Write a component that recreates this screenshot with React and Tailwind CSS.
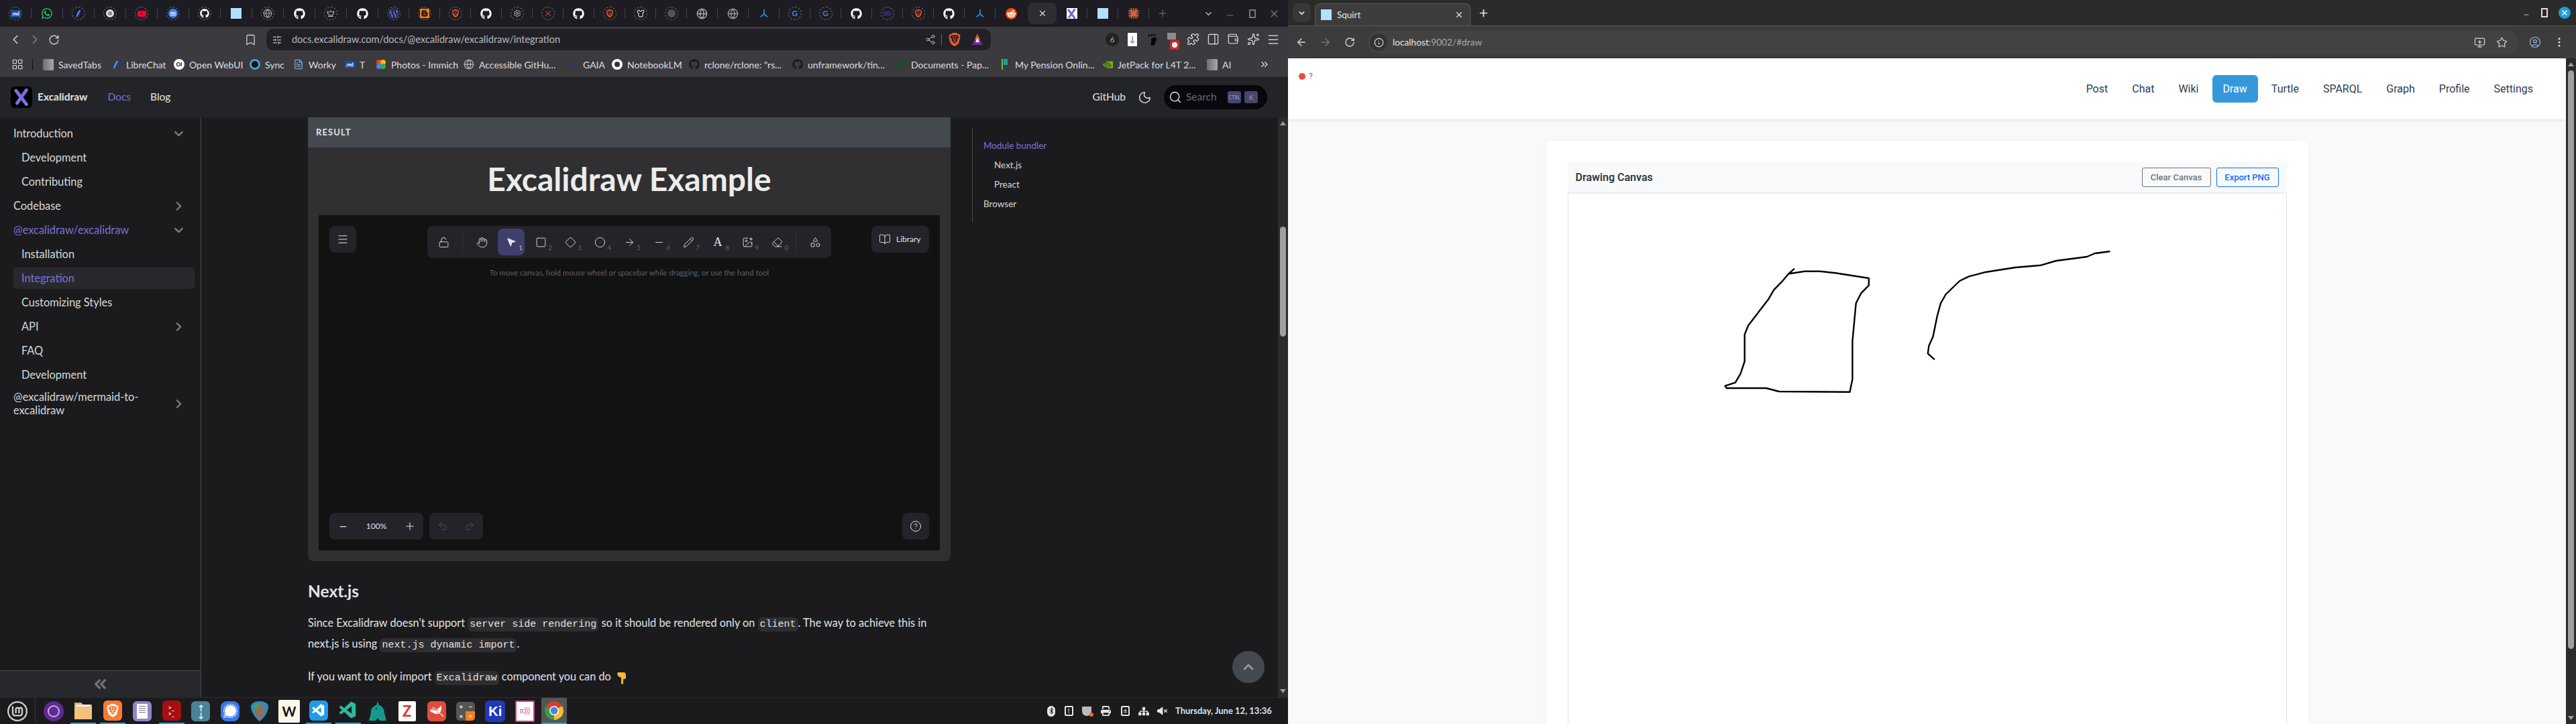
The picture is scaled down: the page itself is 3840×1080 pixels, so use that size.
import React from "react";
import {
  ChevronLeft, ChevronRight, ChevronDown, ChevronUp, ChevronsRight, ChevronsLeft, RotateCw, Bookmark, SlidersHorizontal, Share2, Puzzle,
  PanelRight, Wallet, Sparkles, Menu, Minus, Plus, X, Moon, Search, LayoutGrid, Globe, Crown, Settings, Shirt, FileText, LockOpen, Hand, MousePointer2, Square,
  Diamond, Circle, ArrowRight, Pencil, ImagePlus, Eraser, Shapes, BookOpen, Undo2, Redo2, CircleHelp, ArrowLeft, Info, Star,
  CircleUser, EllipsisVertical, MonitorDown,
} from "lucide-react";
import { FaGithub, FaWhatsapp, FaRedditAlien, FaBluetoothB, FaPrint, FaSitemap, FaVolumeXmark } from "react-icons/fa6";
import { SiBrave, SiWordpress, SiBlogger, SiYoutube, SiLinuxmint, SiSignal, SiGimp, SiNvidia } from "react-icons/si";
import { VscVscode } from "react-icons/vsc";

const Ring = ({ children }) => (
  <span className="flex h-[20px] w-[20px] items-center justify-center rounded-full border border-dashed border-[#77777d]">{children}</span>
);
const Md = () => <span className="flex h-[11px] w-[15px] items-center justify-center rounded-[1px] bg-[#1c4fa5] text-[7px] font-bold leading-none text-white">.md</span>;
const Feather = ({ s = 14 }) => (
  <svg width={s} height={s} viewBox="0 0 16 16"><path d="M12 1C7 3 4 8 4 15c4-2 8-7 8-14z" fill="#4338ca" /><path d="M10 3C8 6 6 9 5 14" stroke="#22d3ee" strokeWidth="1.4" fill="none" /></svg>
);
const Gh = () => <FaGithub size={17} className="text-white" />;
const BlueSq = () => <span className="block h-[16px] w-[16px] bg-[#b3e0ff]" />;
const XLogo = ({ s = 16, c = "#6965db" }) => (
  <svg width={s} height={s} viewBox="0 0 32 32"><path d="M6 4 L25 29" stroke={c} strokeWidth="6" strokeLinecap="round" /><path d="M25 3 L8 27" stroke={c} strokeWidth="6" strokeLinecap="round" /></svg>
);
const Tines = () => (
  <svg width="14" height="14" viewBox="0 0 16 16"><path d="M8 1v8M8 9l-6 5M8 9l6 5" stroke="#2a8fd6" strokeWidth="2" fill="none" /></svg>
);
const Brave = ({ s = 12, c = "#e0532d" }) => <SiBrave size={s} style={{ color: c }} />;

const tabs = [
  <Ring><Md /></Ring>,
  <FaWhatsapp size={18} className="text-[#25d366]" />,
  <Ring><Feather /></Ring>,
  <Ring><span className="block h-[12px] w-[12px] rounded-full border-[3px] border-[#ddd] bg-[#888]" /></Ring>,
  <Ring><SiYoutube size={13} className="text-[#f03]" /></Ring>,
  <Ring><span className="flex h-[14px] w-[14px] flex-col items-center justify-center gap-[1px] rounded-full bg-[#3b82f6]"><i className="block h-px w-[8px] bg-white" /><i className="block h-px w-[8px] bg-white" /><i className="block h-px w-[8px] bg-white" /></span></Ring>,
  <Ring><FaGithub size={14} className="text-white" /></Ring>,
  <BlueSq />,
  <Ring><Globe size={14} className="text-[#a8a8ae]" /></Ring>,
  <Gh />,
  <Ring><Crown size={12} className="text-[#ccc]" /></Ring>,
  <Gh />,
  <Ring><SiWordpress size={14} className="text-[#5a72e0]" /></Ring>,
  <Ring><SiBlogger size={14} className="text-[#f57d00]" /></Ring>,
  <Ring><Brave /></Ring>,
  <Gh />,
  <Ring><Settings size={12} className="text-[#bbb]" /></Ring>,
  <Ring><X size={14} className="text-[#b33]" /></Ring>,
  <Gh />,
  <Ring><Brave /></Ring>,
  <Ring><Shirt size={12} className="text-white" /></Ring>,
  <Ring><span className="block h-[12px] w-[12px] rounded-full bg-[#555]" /></Ring>,
  <Globe size={17} className="text-[#aeb0b5]" />,
  <Globe size={17} className="text-[#9a9ca0]" />,
  <Tines />,
  <Ring><span className="text-[12px] font-bold leading-none text-[#3f7fd8]">G</span></Ring>,
  <Ring><span className="text-[12px] font-bold leading-none text-[#3f7fd8]">G</span></Ring>,
  <Gh />,
  <Ring><span className="text-[8px] font-bold leading-none text-[#4338ca]">DD</span></Ring>,
  <Ring><Brave /></Ring>,
  <Gh />,
  <Tines />,
  <span className="flex h-[17px] w-[17px] items-center justify-center rounded-full bg-[#ff4500]"><FaRedditAlien size={13} className="text-white" /></span>,
];
const tabsAfter = [
  <span className="flex h-[16px] w-[16px] items-center justify-center bg-white"><XLogo s={15} /></span>,
  <BlueSq />,
  <svg width="16" height="16" viewBox="0 0 16 16"><g stroke="#d9623f" strokeWidth="1.5"><path d="M8 0v16M0 8h16M2 2l12 12M14 2L2 14M4 0l8 16M12 0L4 16M0 4l16 8M0 12l16-8" /></g></svg>,
];

const Slot = ({ w, children, sep = true }) => (
  <div className={`flex h-full shrink-0 items-center ${w}`}>
    <div className="flex flex-1 items-center justify-center">{children}</div>
    {sep && <div className="h-[14px] w-px bg-[#45454b]" />}
  </div>
);

const LeftTabs = () => (
  <div className="flex h-[40px] shrink-0 items-center bg-[#1c1c22] text-[#d8d8dc]">
    {tabs.map((t, i) => (
      <Slot key={i} w={i < 12 ? "w-[47px]" : "w-[46px]"} sep={i !== 32}>{t}</Slot>
    ))}
    <div className="ml-[2px] flex h-[32px] w-[43px] shrink-0 items-center justify-center rounded-[8px] bg-[#2d2d33]"><X size={14} /></div>
    {tabsAfter.map((t, i) => (
      <Slot key={i} w="w-[46px]">{t}</Slot>
    ))}
    <div className="ml-[2px] flex w-[36px] shrink-0 justify-center"><Plus size={16} className="text-[#5c5c62]" /></div>
    <div className="ml-[33px] flex w-[34px] shrink-0 justify-center"><ChevronDown size={15} /></div>
    <div className="flex w-[32px] shrink-0 justify-center"><Minus size={14} className="mt-[5px] text-[#77777d]" /></div>
    <div className="flex w-[33px] shrink-0 justify-center"><span className="block h-[13px] w-[10px] border-2 border-[#77777d]" /></div>
    <div className="flex w-[33px] shrink-0 justify-center"><X size={17} className="text-[#77777d]" /></div>
  </div>
);

const BIcon = ({ children }) => <div className="flex w-[29px] shrink-0 justify-center">{children}</div>;
const RIcon = ({ children }) => <div className="flex w-[30px] shrink-0 justify-center">{children}</div>;

const LeftToolbar = () => (
  <div className="flex h-[38px] shrink-0 items-center bg-[#3a3a3f] pl-[8px] text-[#e6e6e8]">
    <BIcon><ChevronLeft size={22} strokeWidth={1.4} /></BIcon>
    <BIcon><ChevronRight size={22} strokeWidth={1.4} className="text-[#88888c]" /></BIcon>
    <BIcon><RotateCw size={17} strokeWidth={1.6} /></BIcon>
    <div className="ml-[264px] flex w-[29px] shrink-0 justify-center"><Bookmark size={19} strokeWidth={1.4} /></div>
    <div className="ml-[9px] flex h-[32px] w-[1080px] shrink-0 items-center rounded-[10px] bg-[#202026] pl-[8px] pr-[10px]">
      <SlidersHorizontal size={15} className="w-[16px] text-[#b8b8bc]" />
      <span className="ml-[14px] text-[14.5px] text-[#b9b9bf]">docs.excalidraw.com/docs/@excalidraw/excalidraw/integration</span>
      <Share2 size={16} strokeWidth={1.4} className="ml-auto text-[#c8c8cc]" />
      <span className="ml-[8px] mr-[9px] h-[16px] w-px bg-[#666]" />
      <Brave s={20} c="#f1592a" />
      <svg width="20" height="20" viewBox="0 0 20 20" className="ml-[14px]"><path d="M10 1 L18 18 H2z" fill="#6b2c91" /><path d="M10 1 L14 10 H6z" fill="#e0532d" /><path d="M10 7 L13 14 H7z" fill="#fff" /></svg>
    </div>
    <div className="ml-[166px] flex">
      <RIcon><span className="flex h-[20px] w-[20px] items-center justify-center rounded-full bg-[#222] text-[12px] text-[#aaa]">6</span></RIcon>
      <RIcon><span className="flex h-[20px] w-[14px] items-center justify-center bg-white text-[12px] font-bold text-[#888]">↓</span></RIcon>
      <RIcon><svg width="14" height="20" viewBox="0 0 14 20"><path d="M6 8c3-1 7-2 7 1 0 3-2 4-2 6s-1 4-4 4-3-3-2-5-1-5 1-6z" fill="#050505" /><circle cx="2" cy="4" r="1.5" fill="#050505" /><circle cx="6" cy="3" r="1.5" fill="#050505" /><circle cx="10" cy="3" r="1.5" fill="#050505" /></svg></RIcon>
      <RIcon><span className="relative block h-[20px] w-[16px]"><span className="block h-[10px] w-[13px] bg-[#8c8c90]" /><span className="absolute bottom-[-5px] right-[-2px] flex h-[14px] w-[14px] items-center justify-center rounded-[2px] bg-[#c92a2a]"><span className="block h-[8px] w-[8px] rounded-full bg-white" /></span></span></RIcon>
      <RIcon><Puzzle size={19} strokeWidth={1.5} /></RIcon>
      <RIcon><PanelRight size={19} strokeWidth={1.5} /></RIcon>
      <RIcon><Wallet size={18} strokeWidth={1.5} /></RIcon>
      <RIcon><Sparkles size={19} strokeWidth={1.5} /></RIcon>
      <RIcon><Menu size={20} strokeWidth={1.5} /></RIcon>
    </div>
  </div>
);

const FolderIc = () => <span className="block h-[17px] w-[16px] rounded-[2px] bg-gradient-to-r from-[#6f6f73] to-[#a9a9ad]" />;
const GhDark = () => <FaGithub size={16} className="text-[#1a1a1e]" />;
const bookmarks = [
  ["w-[101px]", <FolderIc />, "SavedTabs"],
  ["w-[94px]", <Feather s={16} />, "LibreChat"],
  ["w-[113px]", <span className="flex h-[16px] w-[16px] items-center justify-center rounded-full bg-white text-[8px] font-bold text-black">OI</span>, "Open WebUI"],
  ["w-[65px]", <span className="block h-[16px] w-[16px] rounded-full border-[3px] border-[#3ba3d0] bg-[#111]" />, "Sync"],
  ["w-[76px]", <FileText size={16} className="text-[#7fa5c9]" />, "Worky"],
  ["w-[47px]", <Md />, "T"],
  ["w-[131px]", <svg width="16" height="16" viewBox="0 0 16 16"><circle cx="5" cy="5" r="4" fill="#ea4335" /><circle cx="11" cy="5" r="4" fill="#fbbc04" /><circle cx="5" cy="11" r="4" fill="#4285f4" /><circle cx="11" cy="11" r="4" fill="#34a853" /></svg>, "Photos - Immich"],
  ["w-[155px]", <Globe size={16} className="text-[#aeb0b5]" />, "Accessible GitHu..."],
  ["w-[66px]", <span className="text-[7px] font-bold leading-none text-[#23407a]">GAIA</span>, "GAIA"],
  ["w-[115px]", <span className="block h-[16px] w-[16px] rounded-full border-[4px] border-white bg-[#333]" />, "NotebookLM"],
  ["w-[154px]", <GhDark />, 'rclone/rclone: "rs...'],
  ["w-[154px]", <GhDark />, "unframework/tin..."],
  ["w-[155px]", <svg width="16" height="16" viewBox="0 0 16 16"><path d="M14 1C7 3 3 7 2 15c6-1 11-6 12-14z" fill="#17541f" /></svg>, "Documents - Pap..."],
  ["w-[153px]", <span className="flex h-[16px] w-[10px]"><i className="block w-[2px] bg-[#7cb342]" /><i className="ml-[1px] block h-[9px] w-[6px] bg-[#0fa3a3]" /></span>, "My Pension Onlin..."],
  ["w-[156px]", <SiNvidia size={15} className="text-[#76b900]" />, "JetPack for L4T 2..."],
  ["w-[75px]", <FolderIc />, "AI"],
];
const Bookmarks = () => (
  <div className="flex h-[37px] shrink-0 items-center border-b border-[#2f2f33] bg-[#3a3a3f] pl-[17px] text-[14px] text-[#dedee2]">
    <LayoutGrid size={18} strokeWidth={1.5} />
    <span className="ml-[13px] h-[16px] w-px bg-[#111]" />
    <div className="ml-[15px] flex">
      {bookmarks.map(([w, ic, t], i) => (
        <div key={i} className={`flex shrink-0 items-center gap-[7px] whitespace-nowrap ${w}`}>
          <span className="flex w-[16px] shrink-0 justify-center">{ic}</span>
          <span>{t}</span>
        </div>
      ))}
    </div>
    <ChevronsRight size={16} className="ml-[3px]" />
  </div>
);

const DocsNav = () => (
  <div className="flex h-[60px] shrink-0 items-center bg-[#232427] pl-[16px] text-[15.5px] text-[#e3e3e3]">
    <div className="flex h-[32px] w-[32px] items-center justify-center rounded-[6px] bg-black"><XLogo s={26} c="#7a6fe6" /></div>
    <span className="ml-[8px] font-bold">Excalidraw</span>
    <span className="ml-[30px] text-[#7b71d6]">Docs</span>
    <span className="ml-[29px]">Blog</span>
    <span className="ml-auto">GitHub</span>
    <Moon size={21} strokeWidth={1.6} className="ml-[18px]" />
    <div className="ml-[18px] mr-[31px] flex h-[36px] w-[154px] items-center rounded-full bg-[#07070d] pl-[7px]">
      <Search size={20} strokeWidth={1.7} />
      <span className="ml-[6px] w-[62px] text-[#6a6a6e]">Search</span>
      <span className="flex h-[18px] w-[20px] items-center justify-center rounded-[3px] bg-[#47476b] text-[7px] text-[#a0a0c0]">CTRL</span>
      <span className="ml-[5px] flex h-[18px] w-[20px] items-center justify-center rounded-[3px] bg-[#47476b] text-[10px] text-[#a0a0c0]">K</span>
    </div>
  </div>
);

const SideRow = ({ lvl = 0, children, chev, active, sel, h = "h-[36px]" }) => (
  <div className={`flex w-[270px] items-center justify-between pr-[13px] ${lvl ? "pl-[12px]" : ""} ${h} ${sel ? "rounded-[5px] bg-[#29292d]" : ""} ${active ? "text-[#7b71d6]" : ""}`}>
    <span>{children}</span>
    {chev === "d" && <ChevronDown size={21} strokeWidth={2.6} className="text-[#7f7f83]" />}
    {chev === "r" && <ChevronRight size={21} strokeWidth={2.6} className="text-[#7f7f83]" />}
  </div>
);

const Sidebar = () => (
  <div className="flex h-full w-[300px] shrink-0 flex-col border-r border-[#4a4a4e] text-[16.4px] text-[#d6d8dc]">
    <div className="flex flex-1 flex-col pl-[20px] pt-[6px]">
      <SideRow chev="d">Introduction</SideRow>
      <SideRow lvl={1}>Development</SideRow>
      <SideRow lvl={1}>Contributing</SideRow>
      <SideRow chev="r">Codebase</SideRow>
      <SideRow chev="d" active>@excalidraw/excalidraw</SideRow>
      <SideRow lvl={1}>Installation</SideRow>
      <SideRow lvl={1} active sel h="h-[32px] my-[2px]">Integration</SideRow>
      <SideRow lvl={1}>Customizing Styles</SideRow>
      <SideRow lvl={1} chev="r">API</SideRow>
      <SideRow lvl={1}>FAQ</SideRow>
      <SideRow lvl={1}>Development</SideRow>
      <SideRow chev="r" h="h-[46px] mt-[2px] leading-[20px]">@excalidraw/mermaid-to-<br />excalidraw</SideRow>
    </div>
    <div className="flex h-[40px] shrink-0 items-center justify-center border-t border-[#4a4a4e] bg-[#27282b]"><ChevronsLeft size={27} strokeWidth={3} className="text-[#727275]" /></div>
  </div>
);

const Tool = ({ n, active, children }) => (
  <div className={`relative flex h-[40px] w-[40px] shrink-0 items-center justify-center rounded-[8px] ${active ? "bg-[#403e6a]" : ""}`}>
    {children}
    {n && <span className={`absolute bottom-[7px] right-[3px] text-[10px] leading-none ${active ? "text-[#bbb]" : "text-[#666]"}`}>{n}</span>}
  </div>
);
const ic = { size: 17, strokeWidth: 1.3, className: "text-[#e3e3e8]" };

const Excali = () => (
  <div className="mx-[16px] flex h-[500px] flex-col bg-[#121212] p-[16px]">
    <div className="flex items-start">
      <div className="flex h-[40px] w-[40px] items-center justify-center rounded-[8px] bg-[#232329]"><Menu size={18} strokeWidth={1.6} className="text-[#e3e3e8]" /></div>
      <div className="ml-[106px] flex h-[48px] w-[602px] items-center rounded-[8px] bg-[#232329] pl-[4px]">
        <Tool><LockOpen {...ic} /></Tool>
        <span className="ml-[8px] h-[28px] w-px bg-[#323238]" />
        <div className="ml-[8px]"><Tool><Hand {...ic} /></Tool></div>
        <div className="ml-[4px] flex gap-[4px]">
          <Tool n="1" active><MousePointer2 size={16} strokeWidth={1.3} fill="#e3e2fe" className="text-[#e3e2fe]" /></Tool>
          <Tool n="2"><Square {...ic} /></Tool>
          <Tool n="3"><Diamond {...ic} /></Tool>
          <Tool n="4"><Circle {...ic} /></Tool>
          <Tool n="5"><ArrowRight {...ic} /></Tool>
          <Tool n="6"><Minus {...ic} /></Tool>
          <Tool n="7"><Pencil {...ic} /></Tool>
          <Tool n="8"><span className="text-[18px] leading-none text-[#e3e3e8] [font-family:'Liberation_Serif',serif]">A</span></Tool>
          <Tool n="9"><ImagePlus {...ic} /></Tool>
          <Tool n="0"><Eraser {...ic} /></Tool>
        </div>
        <span className="ml-[8px] h-[28px] w-px bg-[#323238]" />
        <div className="ml-[8px]"><Tool><Shapes {...ic} /></Tool></div>
      </div>
      <div className="ml-auto flex h-[40px] w-[86px] items-center rounded-[8px] bg-[#232329] pl-[11px] text-[12px] text-[#e3e3e8]">
        <BookOpen size={18} strokeWidth={1.2} />
        <span className="ml-[8px]">Library</span>
      </div>
    </div>
    <div className="mt-[12px] text-center text-[11.4px] leading-[20px] text-[#5e5e62]">To move canvas, hold mouse wheel or spacebar while dragging, or use the hand tool</div>
    <div className="mt-auto flex">
      <div className="flex h-[40px] w-[140px] items-center rounded-[8px] bg-[#232329] text-[12px] text-[#e3e3e8]">
        <span className="flex w-[40px] justify-center"><Minus size={15} strokeWidth={2} /></span>
        <span className="w-[60px] text-center">100%</span>
        <span className="flex w-[40px] justify-center"><Plus size={18} strokeWidth={1.4} /></span>
      </div>
      <div className="ml-[9px] flex h-[40px] w-[80px] items-center rounded-[8px] bg-[#232329] text-[#55555b]">
        <span className="flex w-[40px] justify-center"><Undo2 size={16} strokeWidth={1.4} /></span>
        <span className="flex w-[40px] justify-center"><Redo2 size={16} strokeWidth={1.4} /></span>
      </div>
      <div className="ml-auto flex h-[40px] w-[40px] items-center justify-center rounded-[8px] bg-[#232329]"><CircleHelp size={18} strokeWidth={1.3} className="text-[#e3e3e8]" /></div>
    </div>
  </div>
);

const Code = ({ children }) => <code className="rounded-[6px] bg-[#2e2e30] px-[3px] py-[2px] text-[15px] text-[#e3e3e3] [font-family:'Liberation_Mono',monospace]">{children}</code>;

const Content = () => (
  <div className="relative flex h-full flex-1 overflow-hidden pl-[159px]">
    <div className="w-[958px] shrink-0 text-[16px] text-[#e3e3e3]">
      <div className="flex h-[45px] items-center bg-[#444950] pl-[12px] text-[13px] font-bold tracking-[1.1px]">RESULT</div>
      <div className="rounded-b-[8px] bg-[#303032] pb-[16px]">
        <h1 className="flex h-[101px] items-center justify-center pb-[8px] text-[48px] font-bold text-[#ececec]">Excalidraw Example</h1>
        <Excali />
      </div>
      <h2 className="mt-[28px] text-[24.5px] font-bold leading-[34px]">Next.js</h2>
      <p className="mt-[16px] whitespace-nowrap text-[16.3px] leading-[28px]">
        Since Excalidraw doesn't support <Code>server side rendering</Code> so it should be rendered only on <Code>client</Code>. The way to achieve this in<br />
        next.js is using <Code>next.js dynamic import</Code>.
      </p>
      <p className="mt-[18px] flex items-center gap-[4px] whitespace-pre text-[16.3px] leading-[28px]">
        <span>If you want to only import <Code>Excalidraw</Code> component you can do </span>
        <svg width="16" height="20" viewBox="0 0 16 20"><path d="M2 2h9c2 0 3 2 3 4v4c0 2-2 2-4 2v6c0 2-3 2-3 0v-8L3 8C1 7 1 3 2 2z" fill="#f5b82e" /></svg>
      </p>
    </div>
    <div className="ml-[32px] mt-[16px] h-[140px] w-[300px] border-l border-[#4a4a4e] pl-[16px] text-[13.5px] text-[#d8d8d8]">
      <div className="mt-[12px] flex h-[29px] items-center text-[#7b71d6]">Module bundler</div>
      <div className="flex h-[29px] items-center pl-[16px]">Next.js</div>
      <div className="flex h-[29px] items-center pl-[16px]">Preact</div>
      <div className="flex h-[29px] items-center">Browser</div>
    </div>
    <div className="absolute bottom-[21px] right-[20px] flex h-[48px] w-[48px] items-center justify-center rounded-full bg-[#444950]"><ChevronUp size={24} strokeWidth={2.6} className="text-[#9a9a9e]" /></div>
  </div>
);

const Tri = ({ up }) => (
  <svg width="9" height="6" viewBox="0 0 9 6"><path d={up ? "M4.5 0L9 6H0z" : "M0 0h9L4.5 6z"} fill="#9c9c9c" /></svg>
);

const Dock = () => {
  const Rounded = ({ bg, children }) => <span className={`flex h-[30px] w-[28px] items-center justify-center rounded-[6px] ${bg}`}>{children}</span>;
  const items = [
    [0, <span className="flex h-[30px] w-[30px] items-center justify-center rounded-full bg-[#5f2a91]"><span className="block h-[18px] w-[18px] rounded-full border-2 border-[#c9a9e8]" /></span>],
    [1, <svg width="30" height="30" viewBox="0 0 30 30"><path d="M2 3h10l3 3h13v22H2z" fill="#e0a860" /><path d="M2 9h26v19H2z" fill="#f4c27a" /><path d="M4 6h22v3H4z" fill="#eee" /></svg>],
    [1, <Rounded bg="bg-[#fb7a2e]"><SiBrave size={20} className="text-white" /></Rounded>],
    [0, <Rounded bg="bg-[#8d88c9]"><span className="flex h-[22px] w-[16px] flex-col gap-[2px] bg-white p-[3px]"><i className="block h-px bg-[#777]" /><i className="block h-px bg-[#777]" /><i className="block h-px bg-[#777]" /><i className="block h-px bg-[#777]" /></span></Rounded>],
    [1, <Rounded bg="bg-[#a50f0f]"><span className="text-[9px] font-bold leading-[9px] text-white">&gt;_<br />&gt;_</span></Rounded>],
    [0, <Rounded bg="bg-[#4c8296]"><span className="flex h-full w-full flex-col items-center justify-around text-[11px] font-bold leading-none text-white">↑<br />↓</span></Rounded>],
    [0, <span className="flex h-[30px] w-[28px] items-center justify-center rounded-[9px] bg-[#3a76f0]"><SiSignal size={21} className="text-white" /></span>],
    [0, <svg width="28" height="32" viewBox="0 0 28 32"><path d="M14 1c7 0 13 3 13 8 0 8-7 18-13 22C8 27 1 17 1 9c0-5 6-8 13-8z" fill="#2c8fb8" /><path d="M7 6c6-2 13 1 15 6-1 6-5 12-8 17C10 24 4 16 7 6z" fill="#9a6a5a" /><path d="M5 8c3-3 9-3 12 0-5 0-7 3-7 9z" fill="#4f9d5b" /></svg>],
    [0, <span className="flex h-[34px] w-[32px] items-center justify-center rounded-[2px] bg-[#fbf6ea] text-[20px] font-bold text-[#111]">W</span>],
    [1, <span className="flex h-[30px] w-[28px] items-center justify-center rounded-[6px] bg-[#1f9ce8]"><VscVscode size={22} className="text-white" /></span>],
    [1, <VscVscode size={30} className="text-[#2dbba0]" />],
    [0, <svg width="28" height="32" viewBox="0 0 28 32"><path d="M14 1l2 6c5 1 8 6 8 12l3 11H17l-3-4-3 4H1l3-11C3 13 7 8 12 7z" fill="#139a8c" /><circle cx="12" cy="12" r="1.5" fill="#0a4f49" /></svg>],
    [0, <span className="flex h-[30px] w-[26px] items-center justify-center rounded-[2px] bg-white text-[22px] font-bold leading-none text-[#d9342b]">Z</span>],
    [0, <Rounded bg="bg-[#e04c38]"><SiGimp size={20} className="text-white" /></Rounded>],
    [0, <span className="grid h-[28px] w-[28px] grid-cols-2 grid-rows-2 overflow-hidden rounded-[5px] bg-[#555] text-center text-[10px] font-bold leading-[14px] text-white"><i className="not-italic">+</i><i className="not-italic">−</i><i className="not-italic">×</i><i className="bg-[#f08020] not-italic">=</i></span>],
    [0, <span className="flex h-[32px] w-[30px] items-center justify-center rounded-[6px] bg-[#2337b8] text-[20px] font-bold text-white [font-family:'Liberation_Sans',sans-serif]">Ki</span>],
    [0, <span className="flex h-[32px] w-[29px] items-center justify-center rounded-[2px] border-2 border-[#e03a8c] bg-white text-[11px] text-[#e03a8c]">π)))</span>],
    [2, <svg width="30" height="30" viewBox="0 0 30 30"><path d="M15 15L2.9 8A14 14 0 0 1 27.1 8Z" fill="#d93a30" /><path d="M15 15L27.1 8A14 14 0 0 1 15 29Z" fill="#f2c02e" /><path d="M15 15L15 29A14 14 0 0 1 2.9 8Z" fill="#3c9a48" /><circle cx="15" cy="15" r="7" fill="#fff" /><circle cx="15" cy="15" r="5.5" fill="#4a86d8" /></svg>],
  ];
  return (
    <div className="flex h-[40px] shrink-0 items-stretch border-t border-[#2a2a2c] bg-[#1b1b1d]">
      <div className="flex w-[53px] shrink-0 items-center justify-center border-r border-[#333]"><SiLinuxmint size={30} className="text-[#d0d0d0]" /></div>
      <div className="ml-[5px] flex">
        {items.map(([s, node], i) => (
          <div key={i} className="flex w-[43.9px] shrink-0 justify-center">
            <div className={`flex w-[38px] items-center justify-center ${s ? "border-b-2 border-[#2a9fd6]" : ""} ${s === 2 ? "bg-[#555]" : ""}`}>{node}</div>
          </div>
        ))}
      </div>
      <div className="ml-auto flex items-center pr-[16px] text-[#e6e6e6]">
        <span className="flex w-[26px] justify-center"><span className="flex h-[16px] w-[12px] items-center justify-center rounded-full bg-[#e6e6e6]"><FaBluetoothB size={11} className="text-[#222]" /></span></span>
        <span className="flex w-[26px] justify-center"><span className="flex h-[15px] w-[13px] items-center justify-center rounded-[2px] border-2 border-[#e6e6e6] text-[9px] font-bold">!</span></span>
        <span className="relative flex w-[28px] justify-center"><span className="block h-[14px] w-[14px] rounded-b-full rounded-t-[3px] bg-[#bbb]" /><span className="absolute bottom-[-1px] right-[4px] block h-[6px] w-[6px] rounded-full bg-[#f06a28]" /></span>
        <span className="flex w-[29px] justify-center"><FaPrint size={15} /></span>
        <span className="flex w-[28px] justify-center"><span className="flex h-[15px] w-[13px] items-center justify-center rounded-[2px] border-2 border-[#e6e6e6] text-[8px] leading-none">≜</span></span>
        <span className="flex w-[27px] justify-center"><FaSitemap size={16} /></span>
        <span className="flex w-[28px] justify-center"><FaVolumeXmark size={15} /></span>
        <span className="ml-[6px] w-[152px] whitespace-nowrap text-[13px] font-bold text-[#d4e3ec]">Thursday, June 12, 13:36</span>
      </div>
    </div>
  );
};

const LeftWindow = () => (
  <div className="flex h-[1080px] w-[1920px] shrink-0 flex-col bg-[#1b1b1d] [font-family:Lato,sans-serif]">
    <LeftTabs />
    <LeftToolbar />
    <Bookmarks />
    <DocsNav />
    <div className="flex min-h-0 flex-1">
      <Sidebar />
      <Content />
      <div className="flex h-full w-[15px] shrink-0 flex-col items-center bg-[#2c2c2c] pt-[6px]">
        <Tri up />
        <div className="mt-[151px] h-[164px] w-[9px] rounded-full bg-[#a0a0a0]" />
        <div className="mt-auto mb-[6px]"><Tri /></div>
      </div>
    </div>
    <Dock />
  </div>
);

const shape1 = [[490,605],[478,630],[465,665],[450,700],[440,740],[420,800],[400,860],[393,900],[393,1020],[385,1075],[375,1115],[355,1130],[358,1140],[435,1140],[460,1155],[598,1157],[603,1100],[603,930],[610,760],[620,715],[635,680],[635,648],[570,625],[540,617],[510,617],[480,628]];
const shape2 = [[763,1012],[750,985],[752,950],[760,910],[768,820],[775,760],[785,720],[812,660],[830,640],[860,622],[920,600],[970,590],[1000,570],[1060,552],[1075,537],[1105,528]];
const pts = (a) => a.map(([x, y]) => `${(x / 1.307 - 38).toFixed(1)},${(y / 3 - 90).toFixed(1)}`).join(" ");

const RightWindow = () => (
  <div className="flex h-[1080px] w-[1920px] shrink-0 flex-col [font-family:Lato,sans-serif]">
    <div className="flex h-[39px] shrink-0 items-end border-b border-[#5a5a5a] bg-[#2b2b2b] pl-[7px] text-[#e6e6e6]">
      <div className="mb-[5px] flex h-[28px] w-[27px] items-center justify-center rounded-[8px] bg-[#383838]"><ChevronDown size={13} strokeWidth={3} /></div>
      <div className="ml-[6px] flex h-[33px] w-[232px] items-center rounded-t-[8px] border border-b-0 border-[#5a5a5a] bg-[#3c3c3c] pl-[8px] text-[13.5px]">
        <BlueSq />
        <span className="ml-[8px]">Squirt</span>
        <X size={14} className="ml-auto mr-[9px]" />
      </div>
      <Plus size={17} strokeWidth={2.4} className="mb-[10px] ml-[11px]" />
      <div className="mb-[10px] ml-auto flex items-center">
        <Minus size={10} className="mt-[5px]" />
        <span className="ml-[17px] block h-[14px] w-[10px] border-2 border-[#ddd]" />
        <span className="ml-[16px] mr-[8px] flex h-[18px] w-[18px] items-center justify-center rounded-full bg-[#1d9fda]"><X size={12} strokeWidth={3} className="text-white" /></span>
      </div>
    </div>
    <div className="flex h-[48px] shrink-0 items-center bg-[#3c3c3c] pl-[11px] text-[#d8d8d8]">
      <ArrowLeft size={18} strokeWidth={1.8} />
      <ArrowRight size={18} strokeWidth={1.8} className="ml-[18px] text-[#777]" />
      <RotateCw size={16} strokeWidth={2} className="ml-[19px]" />
      <div className="ml-[18px] flex h-[34px] w-[1716px] items-center rounded-full bg-[#424242] pl-[4px] pr-[16px]">
        <span className="flex h-[26px] w-[26px] items-center justify-center rounded-full bg-[#333]"><Info size={15} /></span>
        <span className="ml-[8px] text-[13.7px] text-[#e6e6e6]">localhost<span className="text-[#a8a8a8]">:9002/#draw</span></span>
        <MonitorDown size={17} strokeWidth={1.6} className="ml-auto" />
        <Star size={17} strokeWidth={1.6} className="ml-[16px]" />
      </div>
      <CircleUser size={18} strokeWidth={1.6} className="ml-[16px] text-[#9db8e8]" />
      <EllipsisVertical size={18} strokeWidth={2.2} className="ml-[18px]" />
    </div>
    <div className="flex min-h-0 flex-1">
      <div className="flex w-[1905px] shrink-0 flex-col overflow-hidden bg-[#f8f9fa] [font-family:Roboto,sans-serif]">
        <div className="flex h-[91px] shrink-0 items-center justify-between bg-white pl-[16px] pr-[33px] shadow-[0_2px_4px_rgba(0,0,0,0.08)]">
          <div className="flex items-center gap-[5px] self-start pt-[18px]">
            <span className="block h-[10px] w-[10px] rounded-full bg-[#e74c3c]" />
            <span className="text-[12px] text-[#6c757d]">?</span>
          </div>
          <div className="flex gap-[4px] text-[16px] text-[#2c3e50]">
            {["Post", "Chat", "Wiki", "Draw", "Turtle", "SPARQL", "Graph", "Profile", "Settings"].map((t) => (
              <span key={t} className={`rounded-[6px] px-[16px] py-[8px] leading-[25px] ${t === "Draw" ? "bg-[#3498db] text-white" : ""}`}>{t}</span>
            ))}
          </div>
        </div>
        <div className="mx-auto mt-[32px] flex w-[1136px] shrink-0 flex-col rounded-[8px] bg-white px-[32px] pt-[32px] shadow-[0_2px_10px_rgba(0,0,0,0.04)]">
          <div className="flex h-[47px] items-center justify-between border-b-2 border-[#e9ecef] bg-[#f8f9fa] px-[12px]">
            <span className="text-[16px] font-semibold text-[#343a40]">Drawing Canvas</span>
            <div className="flex gap-[8px] text-[13px] font-medium">
              <span className="flex h-[29px] w-[103px] items-center justify-center rounded-[3px] border border-[#6c757d] text-[#6c757d]">Clear Canvas</span>
              <span className="flex h-[29px] w-[93px] items-center justify-center rounded-[3px] border border-[#0d6efd] text-[#0d6efd]">Export PNG</span>
            </div>
          </div>
          <div className="h-[900px] border-x border-[#dee2e6] bg-white">
            <svg width="1070" height="900" className="block">
              <polyline points={pts(shape1)} fill="none" stroke="#000" strokeWidth="2.4" strokeLinejoin="round" />
              <polyline points={pts(shape2)} fill="none" stroke="#000" strokeWidth="2.4" strokeLinejoin="round" />
            </svg>
          </div>
        </div>
      </div>
      <div className="flex w-[15px] shrink-0 flex-col items-center bg-[#2c2c2c] pt-[6px]">
        <Tri up />
        <div className="mt-[6px] h-[863px] w-[9px] rounded-full bg-[#a0a0a0]" />
        <div className="mt-auto mb-[6px]"><Tri /></div>
      </div>
    </div>
  </div>
);

export default function App() {
  return (
    <div className="flex h-[1080px] w-[3840px] overflow-hidden">
      <LeftWindow />
      <RightWindow />
    </div>
  );
}
